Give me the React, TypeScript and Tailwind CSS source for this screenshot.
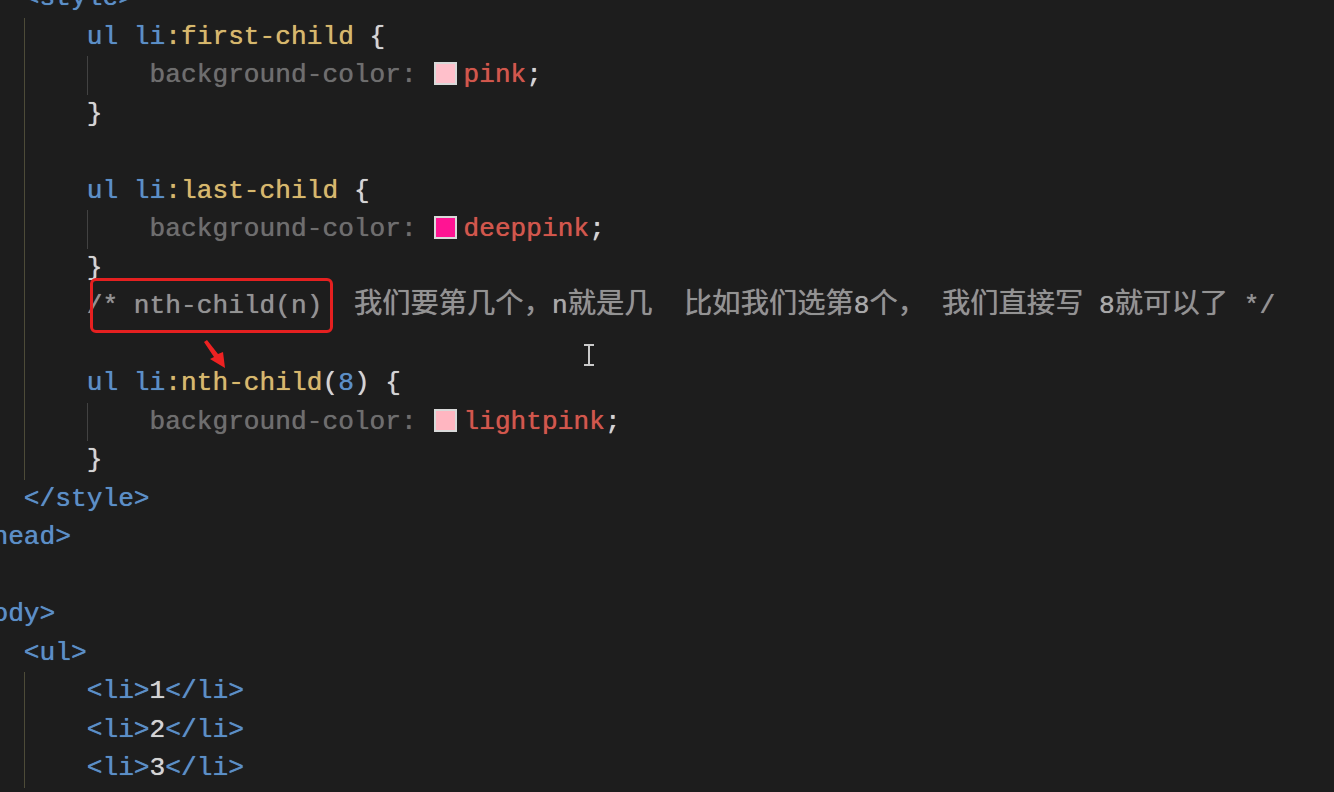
import React from 'react';

type Tok = { t: string; c?: string; cjk?: boolean; sw?: string };
type Line = { indent: number; guides?: number[]; toks: Tok[] };

const BLUE = 'text-[#5b8fc7]';
const YEL = 'text-[#d7b86c]';
const WHITE = 'text-[#d4d4d4]';
const PROP = 'text-[#6e6e6e]';
const VAL = 'text-[#d2574c]';
const CMT = 'text-[#939393]';
const CMT2 = 'text-[#a9a9a9]';

const prop = (name: string, swatch: string): Tok[] => [
  { t: 'background-color: ', c: PROP },
  { t: '', sw: swatch },
  { t: name, c: VAL },
  { t: ';', c: WHITE },
];

const lines: Line[] = [
  { indent: 1, toks: [{ t: '<style>', c: BLUE }] },
  { indent: 2, guides: [1], toks: [{ t: 'ul li', c: BLUE }, { t: ':first-child', c: YEL }, { t: ' {', c: WHITE }] },
  { indent: 3, guides: [1, 2], toks: prop('pink', 'bg-[#ffc0cb]') },
  { indent: 2, guides: [1], toks: [{ t: '}', c: WHITE }] },
  { indent: 2, guides: [1], toks: [] },
  { indent: 2, guides: [1], toks: [{ t: 'ul li', c: BLUE }, { t: ':last-child', c: YEL }, { t: ' {', c: WHITE }] },
  { indent: 3, guides: [1, 2], toks: prop('deeppink', 'bg-[#ff1493]') },
  { indent: 2, guides: [1], toks: [{ t: '}', c: WHITE }] },
  {
    indent: 2,
    guides: [1],
    toks: [
      { t: '/* nth-child(n)  ', c: CMT },
      { t: '我们要第几个，', c: CMT, cjk: true },
      { t: 'n', c: CMT2 },
      { t: '就是几', c: CMT, cjk: true },
      { t: '  ', c: CMT },
      { t: '比如我们选第', c: CMT, cjk: true },
      { t: '8', c: CMT2 },
      { t: '个，', c: CMT, cjk: true },
      { t: ' ', c: CMT },
      { t: '我们直接写', c: CMT, cjk: true },
      { t: ' 8', c: CMT2 },
      { t: '就可以了', c: CMT, cjk: true },
      { t: ' */', c: CMT },
    ],
  },
  { indent: 2, guides: [1], toks: [] },
  {
    indent: 2,
    guides: [1],
    toks: [
      { t: 'ul li', c: BLUE },
      { t: ':nth-child', c: YEL },
      { t: '(', c: WHITE },
      { t: '8', c: BLUE },
      { t: ') {', c: WHITE },
    ],
  },
  { indent: 3, guides: [1, 2], toks: prop('lightpink', 'bg-[#ffb6c1]') },
  { indent: 2, guides: [1], toks: [{ t: '}', c: WHITE }] },
  { indent: 1, toks: [{ t: '</style>', c: BLUE }] },
  { indent: 0, toks: [{ t: '</head>', c: BLUE }] },
  { indent: 0, toks: [] },
  { indent: 0, toks: [{ t: '<body>', c: BLUE }] },
  { indent: 1, toks: [{ t: '<ul>', c: BLUE }] },
  { indent: 2, guides: [1], toks: [{ t: '<li>', c: BLUE }, { t: '1', c: WHITE }, { t: '</li>', c: BLUE }] },
  { indent: 2, guides: [1], toks: [{ t: '<li>', c: BLUE }, { t: '2', c: WHITE }, { t: '</li>', c: BLUE }] },
  { indent: 2, guides: [1], toks: [{ t: '<li>', c: BLUE }, { t: '3', c: WHITE }, { t: '</li>', c: BLUE }] },
];

const CodeLine: React.FC<{ line: Line }> = ({ line }) => {
  const chunks = Array.from({ length: line.indent }, (_, i) => i);
  return (
    <div className="h-[38.5px] leading-[38.5px] whitespace-pre flex items-start">
      {chunks.map((i) => (
        <span
          key={i}
          className={`inline-block w-[4ch] h-[38.5px] shrink-0 ${
            line.guides?.includes(i)
              ? i === 1
                ? 'shadow-[inset_1px_0_0_#4d4b38]'
                : 'shadow-[inset_1px_0_0_#424242]'
              : ''
          }`}
        />
      ))}
      <span>
        {line.toks.map((tok, k) =>
          tok.sw ? (
            <span
              key={k}
              className={`inline-block w-[23px] h-[23px] ml-[2px] mr-[6px] align-[-3px] border-2 border-[#d9d9d9] ${tok.sw}`}
            />
          ) : tok.cjk ? (
            <span
              key={k}
              className={`${tok.c} text-[28.3px] leading-[20px] font-['Noto_Sans_CJK_SC',sans-serif]`}
            >
              {tok.t}
            </span>
          ) : (
            <span key={k} className={tok.c}>
              {tok.t}
            </span>
          )
        )}
      </span>
    </div>
  );
};

export default function App() {
  return (
    <div className="relative w-[1334px] h-[792px] overflow-hidden bg-[#1d1d1d] font-['Liberation_Mono',monospace] text-[26.2px] [text-shadow:0_0_0.7px_currentColor]">
      <div className="flex flex-col -mt-[21px] -ml-[39px]">
        {lines.map((line, i) => (
          <CodeLine key={i} line={line} />
        ))}
      </div>

      {/* highlight box */}
      <div className="absolute left-[90px] top-[278px] w-[243px] h-[55px] border-[3px] border-[#e52020] rounded-[6px]" />

      {/* arrow */}
      <svg className="absolute left-[200px] top-[338px]" width="32" height="34" viewBox="0 0 32 34">
        <polygon points="4,4 14,19 10,21 25,30 23,14 18,16 7,2" fill="#ee2222" />
      </svg>

      {/* text cursor */}
      <svg className="absolute left-[582px] top-[342px]" width="14" height="26" viewBox="0 0 14 26">
        <path d="M2 3h10M2 23h10M7 3v20" stroke="#c9c9c9" strokeWidth="2" fill="none" />
      </svg>
    </div>
  );
}
